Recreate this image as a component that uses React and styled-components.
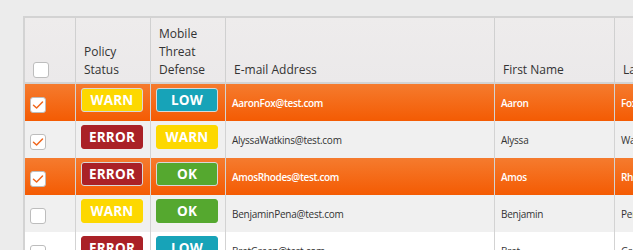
import React from "react";
import styled, { createGlobalStyle, css } from "styled-components";

const Global = createGlobalStyle`
  html, body { margin: 0; padding: 0; background: #ececec; overflow: hidden; }
  body { font-family: "Open Sans", "Noto Sans", sans-serif; }
`;

const Page = styled.div`
  padding: 16px 0 0 23px;
  width: 900px;
`;

const Table = styled.table`
  border-collapse: separate;
  border-spacing: 0;
  table-layout: fixed;
  width: 790px;
  border-left: 2px solid #d3d3d3;
  border-top: 2px solid #d3d3d3;
`;

const Th = styled.th`
  box-sizing: border-box;
  width: ${(p) => p.$w}px;
  height: 66px;
  padding: 0 8px 3px;
  text-align: left;
  vertical-align: bottom;
  font-weight: 400;
  font-size: 12px;
  line-height: 18px;
  color: #333;
  background: linear-gradient(#eeecec, #ebe9ea);
  border-right: 1px solid #d0d0d0;
  border-bottom: 2px solid #d3d3d3;
`;

const CheckTh = styled(Th)`
  padding: 0 0 4px 8px;
`;

const Row = styled.tr`
  ${(p) =>
    p.$hl
      ? css`
          background: linear-gradient(#f57b2e, #f45b03);
          color: #fff;
          font-weight: 600;
          letter-spacing: -0.35px;
        `
      : css`
          background: ${p.$alt ? "#f0f0f0" : "#ffffff"};
          color: #333;
          letter-spacing: -0.25px;
        `}
`;

const Td = styled.td`
  box-sizing: border-box;
  height: 37px;
  padding: 0 6px;
  font-size: 10px;
  border-right: 1px solid #d3d3d3;
  vertical-align: middle;
  white-space: nowrap;
  overflow: hidden;
`;

const BoxCell = styled(Td)`
  vertical-align: top;
  padding: 13px 0 0 5px;
`;

const BadgeCell = styled(Td)`
  vertical-align: top;
  padding: 4px 0 0 5px;
  letter-spacing: 0;
`;

const Box = styled.span`
  box-sizing: border-box;
  display: flex;
  align-items: center;
  justify-content: center;
  width: 16px;
  height: 16px;
  background: #fff;
  border: 1px solid #bdbdbd;
  border-radius: 3px;
`;

const colors = {
  WARN: "#fdd800",
  LOW: "#17a3b8",
  ERROR: "#aa2127",
  OK: "#55a82f",
};

const Badge = styled.span`
  box-sizing: border-box;
  display: flex;
  align-items: center;
  justify-content: center;
  width: 62px;
  height: 24px;
  border-radius: 3px;
  background: ${(p) => colors[p.$kind]};
  border: 1px solid ${(p) => (p.$hl ? "#d8d8d8" : colors[p.$kind])};
  color: #fff;
  font-weight: 700;
  font-size: 13.5px;
  letter-spacing: 0.2px;
`;

const Check = () => (
  <svg width="12" height="10" viewBox="0 0 12 10">
    <path d="M1.5 5.2 L4.6 8 L10.5 2" fill="none" stroke="#f0661c" strokeWidth="1.5" strokeLinecap="round" strokeLinejoin="round" />
  </svg>
);

const rows = [
  { hl: true, checked: true, p: "WARN", m: "LOW", email: "AaronFox@test.com", first: "Aaron", last: "Fox" },
  { alt: true, checked: true, p: "ERROR", m: "WARN", email: "AlyssaWatkins@test.com", first: "Alyssa", last: "Watkins" },
  { hl: true, checked: true, p: "ERROR", m: "OK", email: "AmosRhodes@test.com", first: "Amos", last: "Rhodes" },
  { alt: true, checked: false, p: "WARN", m: "OK", email: "BenjaminPena@test.com", first: "Benjamin", last: "Pena" },
  { checked: false, p: "ERROR", m: "LOW", email: "BretGreen@test.com", first: "Bret", last: "Green" },
];

export default function App() {
  return (
    <Page>
      <Global />
      <Table>
        <thead>
          <tr>
            <CheckTh $w={51}>
              <Box />
            </CheckTh>
            <Th $w={75}>Policy Status</Th>
            <Th $w={75}>Mobile Threat Defense</Th>
            <Th $w={269}>E-mail Address</Th>
            <Th $w={120}>First Name</Th>
            <Th $w={200}>Last Name</Th>
          </tr>
        </thead>
        <tbody>
          {rows.map((r, i) => (
            <Row key={i} $hl={r.hl} $alt={r.alt}>
              <BoxCell>
                <Box>{r.checked && <Check />}</Box>
              </BoxCell>
              <BadgeCell>
                <Badge $kind={r.p} $hl={r.hl}>{r.p}</Badge>
              </BadgeCell>
              <BadgeCell>
                <Badge $kind={r.m} $hl={r.hl}>{r.m}</Badge>
              </BadgeCell>
              <Td>{r.email}</Td>
              <Td>{r.first}</Td>
              <Td>{r.last}</Td>
            </Row>
          ))}
        </tbody>
      </Table>
    </Page>
  );
}
